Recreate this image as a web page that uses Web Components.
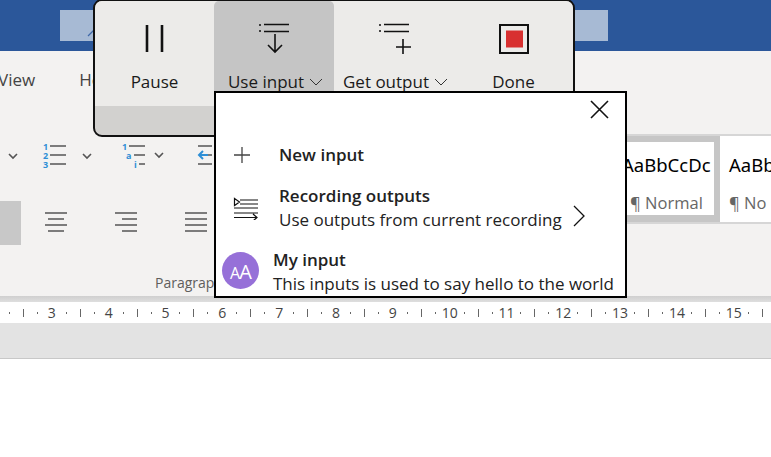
<!DOCTYPE html>
<html><head><meta charset="utf-8">
<style>
html,body{margin:0;padding:0;width:771px;height:457px;overflow:hidden;background:#fff;font-family:"Open Sans","Noto Sans",sans-serif}
</style></head><body>
<word-app></word-app>
<template id="t-app">
<style>
:host{display:block;position:relative;width:771px;height:457px;overflow:hidden;background:#fff}
.title{height:51px;background:#2b579a;display:flex;padding:10px 0 0 60px;box-sizing:border-box;align-items:flex-start}
.search{width:548px;height:31px;background:#a7bad4;display:flex;padding:19px 0 0 27px;box-sizing:border-box}
.search svg{display:block}
</style>
<div class="title"><div class="search"><svg width="8" height="8" viewBox="0 0 8 8" fill="none" stroke="#3f68a8" stroke-width="1.200"><path d="M1 7l6-6"/></svg></div></div>
<word-ribbon></word-ribbon>
<word-ruler></word-ruler>
<word-doc></word-doc>
<rec-toolbar></rec-toolbar>
<input-menu></input-menu>
</template>
<template id="t-ribbon">
<style>
:host{display:block;height:245px;background:#f3f2f1;box-sizing:border-box;font-family:"Open Sans",sans-serif;overflow:hidden}
.tabs{height:83px;display:flex;gap:44px;margin-left:-2px;padding-top:17px;box-sizing:border-box;font-size:17px;color:#444;line-height:24px}
.body{display:flex;justify-content:space-between;height:162px}
.left{width:626px;display:flex;flex-direction:column}
.r1{height:40px;padding-top:5px;box-sizing:border-box;display:flex;align-items:flex-start}
.r2{display:flex;height:44px;margin-top:27px;align-items:center}
.sel{width:21px;height:44px;background:#c8c8c8}
.lab{font-size:14px;color:#605e5c;margin:28px 0 0 155px;line-height:20px}
svg{display:block;flex:none}
.gal{width:145px;display:flex;flex-direction:column;margin-top:0}
.g{display:flex;background:#d6d6d6;padding:2px 0;box-sizing:border-box;height:90px}
.cur{width:94px;background:#fff;border:solid #c6c6c6;border-width:6px 6px 7px 0;box-sizing:border-box;display:flex;flex-direction:column;overflow:hidden}
.nxt{flex:1;background:#fff;overflow:hidden;display:flex;flex-direction:column;padding-left:9px;padding-top:6px}
.s{font:18.5px/24px "Noto Sans",sans-serif;color:#000;white-space:nowrap;height:46px;padding-top:11px;box-sizing:border-box}
.n{font-size:16.5px;color:#666;line-height:20px;white-space:nowrap;padding-top:5px}
.cur .s{margin-left:-4px}
.cur .n{padding-left:4px}
</style>
<div class="tabs"><span>View</span><span>Help</span></div>
<div class="body">
<div class="left">
<div class="r1">
<svg width="212" height="34" viewBox="0 0 212 34" fill="none">
<path d="M9 15l4 4 4-4M83 15l4 4 4-4M155 14l4 4 4-4" stroke="#555" stroke-width="1.600"/>
<path d="M50 7h16M50 16h16M50 25h16M129 7h16M134 16h11M139 25h6M198 7h14M205 16h7M198 25h14" stroke="#555" stroke-width="1.300"/>
<text x="43" y="11" font-size="9" font-weight="700" fill="#2e8fd6" font-family="Open Sans">1</text><text x="43" y="20" font-size="9" font-weight="700" fill="#2e8fd6" font-family="Open Sans">2</text><text x="43" y="29" font-size="9" font-weight="700" fill="#2e8fd6" font-family="Open Sans">3</text>
<text x="122" y="11" font-size="9" font-weight="700" fill="#2e8fd6" font-family="Open Sans">1</text><text x="126" y="20" font-size="9" font-weight="700" fill="#2e8fd6" font-family="Open Sans">a</text><text x="134" y="29" font-size="9" font-weight="700" fill="#2e8fd6" font-family="Open Sans">i</text>
<path d="M208 16h-9m4-4l-4 4 4 4" stroke="#2e8fd6" stroke-width="2"/>
</svg>
</div>
<div class="r2"><div class="sel"></div>
<svg width="190" height="44" viewBox="0 0 190 44" fill="none" stroke="#555" stroke-width="1.400"><path d="M24 12h22M27 18h16M24 24h22M27 30h16M94 12h22M101 18h15M94 24h22M101 30h15M164 12h22M164 18h22M164 24h22M164 30h22"/></svg>
</div>
<div class="lab">Paragraph</div>
</div>
<div class="gal"><div class="g">
<div class="cur"><div class="s">AaBbCcDc</div><div class="n">¶ Normal</div></div>
<div class="nxt"><div class="s">AaBbCcDc</div><div class="n">¶ No Spacing</div></div>
</div></div>
</div>
</template>
<template id="t-ruler">
<style>
:host{display:block;font-family:"Open Sans",sans-serif}
.sh{height:6px;background:linear-gradient(#cfcfcf,#dedede)}
.r{height:21px;background:#fff;display:flex;overflow:hidden;color:#444;font-size:14px;line-height:21px}
.r span{flex:0 0 56.830px;display:flex;align-items:center}
.r span:first-child{margin-left:-12px}
i{display:block;width:1px;background:#666;height:2px;margin-left:13px}
i.f{margin-left:7px}
i.l{height:8px}
b{font-weight:400;width:14px;display:flex;justify-content:center;white-space:nowrap;flex:none}
.g{height:35px;background:#e3e3e3;border-bottom:1px solid #c8c8c8}
</style>
<div class="sh"></div>
<div class="r" id="r"></div>
<div class="g"></div>
</template>
<template id="t-toolbar">
<style>
:host{display:flex;flex-direction:column;position:absolute;left:93px;top:-1px;width:482px;height:138px;box-sizing:border-box;background:#d2d1cf;border:2px solid #111;border-radius:9px;overflow:hidden;font-family:"Open Sans",sans-serif;color:#1a1a1a}
.top{display:flex;height:105px;background:#ecebe9}
.b{width:120px;display:flex;flex-direction:column;align-items:center;font-size:17px;line-height:22px;white-space:nowrap;flex:none;box-sizing:border-box;padding-top:20px}
.b:first-child,.b:last-child{width:119px}
.b svg.ic{display:block;height:36px;width:40px}
.t{margin-top:14px;display:flex;align-items:center;gap:5px}
.l{margin-left:3px}
.a{background:#c5c5c5;border-radius:5px 5px 0 0}
</style>
<div class="top">
<div class="b"><svg class="ic" viewBox="0 0 40 36" fill="none" stroke="#111" stroke-width="2.600"><path d="M12 4v27M27 4v27"/></svg><div class="t">Pause</div></div>
<div class="b a"><svg class="ic" viewBox="0 0 40 36" fill="none" stroke="#111" stroke-width="1.600"><path d="M5 4h2M5 10h2M10 3.500h25M10 10.500h25M21 13v18M14 24l7 7 7-7"/></svg><div class="t l">Use input<svg width="14" height="8" viewBox="0 0 14 8" fill="none" stroke="#333" stroke-width="1"><path d="M1 1l6 6 6-6"/></svg></div></div>
<div class="b"><svg class="ic" viewBox="0 0 40 36" fill="none" stroke="#111" stroke-width="1.600"><path d="M5 4h2M5 10h2M10 3.500h25M10 10.500h25M29 18v15M22 26h15"/></svg><div class="t l">Get output<svg width="14" height="8" viewBox="0 0 14 8" fill="none" stroke="#333" stroke-width="1"><path d="M1 1l6 6 6-6"/></svg></div></div>
<div class="b"><svg class="ic" viewBox="0 0 40 36"><rect x="6" y="4" width="28" height="28" fill="none" stroke="#111" stroke-width="2"/><rect x="12" y="9.500" width="17" height="17" fill="#d83030"/></svg><div class="t">Done</div></div>
</div>
</template>
<template id="t-menu">
<style>
:host{display:flex;flex-direction:column;position:absolute;left:214px;top:91px;width:412.500px;height:207px;box-sizing:border-box;background:#fff;border:2px solid #000;font-family:"Open Sans",sans-serif;color:#222;font-size:17px;line-height:24px}
.x{display:flex;justify-content:flex-end;height:32px;padding:7px 16px 0 0;box-sizing:border-box}
.i{display:flex;align-items:center}
.ic{width:63px;display:flex;padding-left:17px;box-sizing:border-box;flex:none}
b{font-weight:600;display:block}
.txt{white-space:nowrap}
.new{height:40px;margin-top:10px}
.rec{height:48px;margin-top:9px}
.rec .ch{margin:15px 0 0 10px}
.my{height:48px;margin-top:16px}
.av{width:37px;height:37px;border-radius:50%;background:#9670d8;color:#fff;font-size:20px;font-weight:400;display:flex;align-items:baseline;justify-content:center;line-height:39px;margin:0 14px 4px 6px;flex:none;letter-spacing:-1px}
.av small{font-size:16px}
</style>
<div class="x"><svg width="19" height="19" viewBox="0 0 19 19" fill="none" stroke="#111" stroke-width="1.600"><path d="M1 1l17 17M18 1L1 18"/></svg></div>
<div class="i new"><div class="ic"><svg width="18" height="18" viewBox="0 0 18 18" fill="none" stroke="#444" stroke-width="1.300"><path d="M9 1v16M1 9h16"/></svg></div><div class="txt"><b>New input</b></div></div>
<div class="i rec"><div class="ic"><svg width="26" height="24" viewBox="0 0 26 24" fill="none" stroke="#111" stroke-width="1.200"><path d="M1.500 2.500l5 3.500-5 3.500zM7 4h18M7 8h18M1 12h24M1 17h24M1 21.500h23M20 18l4 3.500-4 3.500"/></svg></div><div class="txt"><b>Recording outputs</b>Use outputs from current recording</div><svg class="ch" width="14" height="22" viewBox="0 0 14 22" fill="none" stroke="#111" stroke-width="1.300"><path d="M2 1l10 10L2 21"/></svg></div>
<div class="i my"><div class="av"><small>A</small>A</div><div class="txt"><b>My input</b>This inputs is used to say hello to the world</div></div>
</template>
<script>
function def(name,tid,init){customElements.define(name,class extends HTMLElement{constructor(){super();const s=this.attachShadow({mode:"open"});s.appendChild(document.getElementById(tid).content.cloneNode(true));if(init)init(s)}})}
def("word-ribbon","t-ribbon");
def("word-ruler","t-ruler",s=>{const r=s.getElementById("r");let h="";for(let n=2;n<=16;n++){h+=`<span><b>${n}</b><i class="f"></i><i class="l"></i><i></i></span>`}r.innerHTML=h;});
customElements.define("word-doc",class extends HTMLElement{constructor(){super();this.attachShadow({mode:"open"}).innerHTML='<style>:host{display:block;height:98px;background:#fff}</style>'}});
def("rec-toolbar","t-toolbar");
def("input-menu","t-menu");
def("word-app","t-app");
</script>
</body></html>
